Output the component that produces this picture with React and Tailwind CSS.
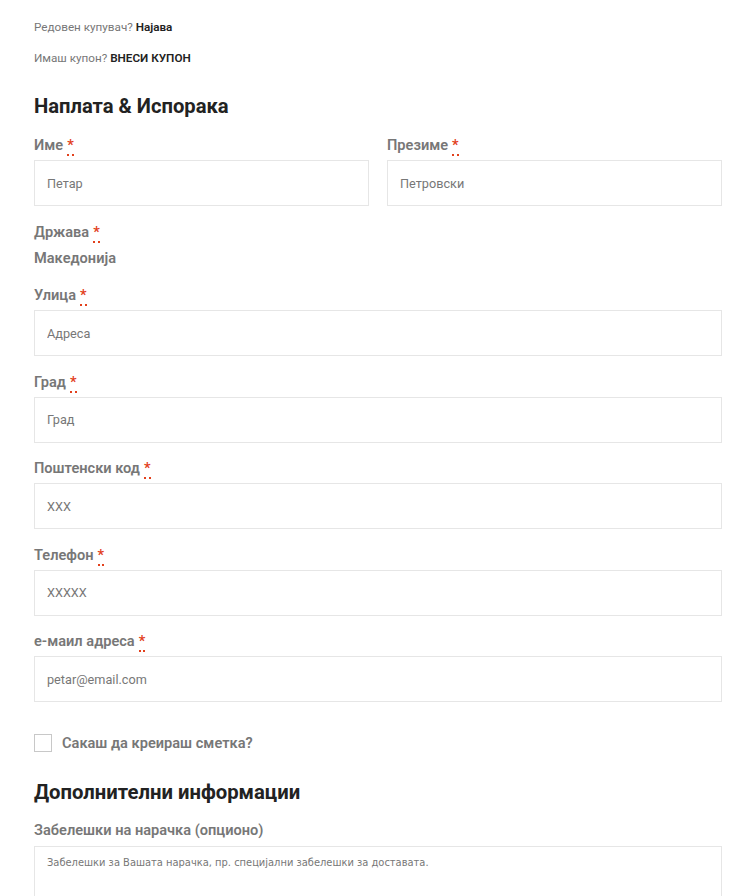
import React from 'react';

const Req = () => (
  <abbr
    title="required"
    className="ml-1 text-[#e2401c] no-underline border-b-2 border-dotted border-[#e2401c] leading-none"
  >
    *
  </abbr>
);

const Field = ({ label, placeholder, className = '' }) => (
  <div className={className}>
    <label className="block text-[14.6px] font-semibold text-[#777] leading-[20px] mb-[5px]">
      {label}
      <Req />
    </label>
    <input
      type="text"
      placeholder={placeholder}
      className="block w-full h-[46px] px-3 border border-[#e6e6e6] bg-white text-[12.7px] text-[#777] placeholder:text-[#777] outline-none"
    />
  </div>
);

export default function App() {
  return (
    <div className="min-h-[896px] bg-white pl-[34px] pr-[14px] pt-[18px] font-['Roboto',sans-serif] text-[#777]">
      <p className="text-[11.7px] leading-[18px]">
        Редовен купувач? <a className="font-semibold text-[#222]">Најава</a>
      </p>
      <p className="text-[11.7px] leading-[18px] mt-[13px]">
        Имаш купон? <a className="font-semibold text-[#222]">ВНЕСИ КУПОН</a>
      </p>

      <h3 className="mt-[25px] text-[20.2px] font-bold text-[#222] leading-[28px]">Наплата &amp; Испорака</h3>

      <div className="mt-[15px] grid grid-cols-2 gap-[18px]">
        <Field label="Име" placeholder="Петар" />
        <Field label="Презиме" placeholder="Петровски" />
      </div>

      <div className="mt-[16px]">
        <label className="block text-[14.6px] font-semibold text-[#777] leading-[20px]">
          Држава
          <Req />
        </label>
        <div className="mt-[6px] text-[14.6px] font-semibold text-[#777] leading-[20px]">Македонија</div>
      </div>

      <div className="mt-[17px] flex flex-col gap-[15.5px]">
        <Field label="Улица" placeholder="Адреса" />
        <Field label="Град" placeholder="Град" />
        <Field label="Поштенски код" placeholder="XXX" />
        <Field label="Телефон" placeholder="XXXXX" />
        <Field label="е-маил адреса" placeholder="petar@email.com" />
      </div>

      <label className="mt-[31px] flex items-center gap-[10px]">
        <span className="w-[18px] h-[18px] border border-[#c8c8c8] bg-white" />
        <span className="text-[14.6px] font-semibold text-[#777] leading-[20px]">Сакаш да креираш сметка?</span>
      </label>

      <h3 className="mt-[25px] text-[20.3px] font-bold text-[#222] leading-[28px]">Дополнителни информации</h3>

      <label className="block mt-[14px] text-[14.6px] font-semibold text-[#777] leading-[20px]">
        Забелешки на нарачка (опционо)
      </label>
      <textarea
        placeholder="Забелешки за Вашата нарачка, пр. специјални забелешки за доставата."
        className="block mt-[6px] w-full h-[100px] px-3 py-[8px] border border-[#e6e6e6] text-[11px] font-['DejaVu_Sans_Condensed','DejaVu_Sans',sans-serif] text-[#777] placeholder:text-[#777] outline-none resize-none"
      />
    </div>
  );
}
